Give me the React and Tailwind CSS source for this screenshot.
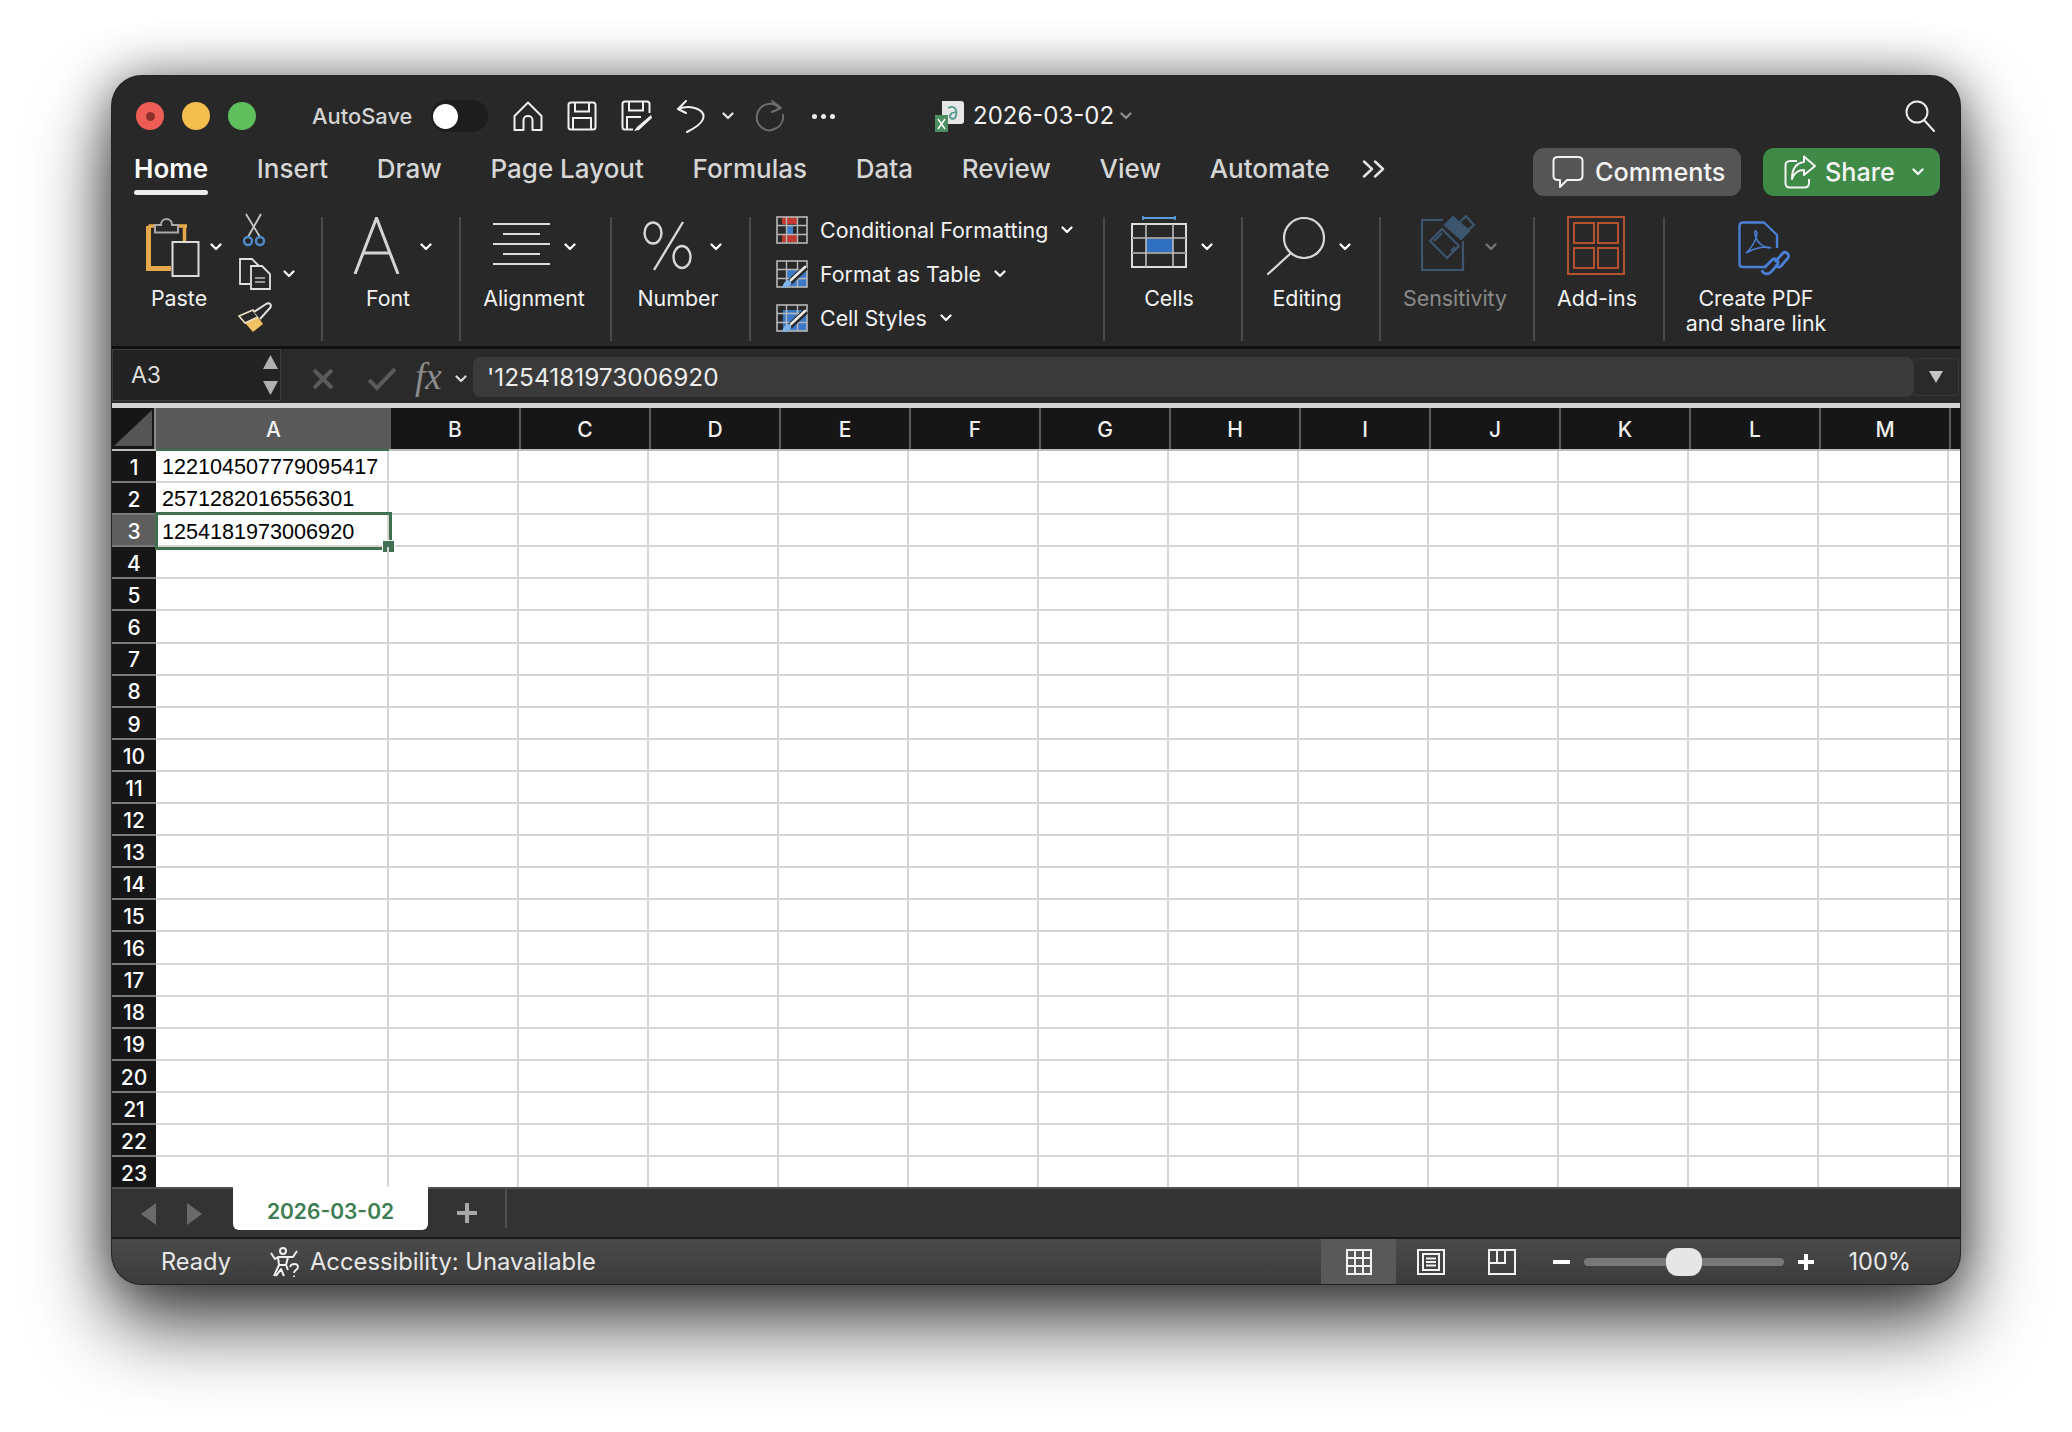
import React from "react";

const cols = ["B","C","D","E","F","G","H","I","J","K","L","M"];
const rows = Array.from({ length: 23 }, (_, i) => i + 1);
const data = { 1: "122104507779095417", 2: "2571282016556301", 3: "1254181973006920" };

function Chev({ c = "#ffffff", className = "" }) {
  return (
    <svg width="12" height="8" viewBox="0 0 12 8" className={"shrink-0 " + className}>
      <path d="M1.5 1.5 L6 6 L10.5 1.5" fill="none" stroke={c} strokeWidth="2.2" strokeLinecap="round" strokeLinejoin="round" />
    </svg>
  );
}

function Label({ children, dim }) {
  return (
    <div className={"flex justify-center text-[21.4px] leading-[24.5px] whitespace-nowrap " + (dim ? "text-[#8a8a8a]" : "text-[#f2f2f2]")}>
      <span className="text-center">{children}</span>
    </div>
  );
}

function Sep() {
  return <div className="w-[2px] h-[124px] mt-[20px] bg-[#4a4a4a] shrink-0" />;
}

function CellStyleIcon({ variant }) {
  const g = "#b8b8b8";
  return (
    <svg width="32" height="28" viewBox="0 0 32 28" className="shrink-0">
      {variant === "cond" && (
        <>
          <rect x="6" y="1" width="15" height="7" fill="#c0392f" />
          <rect x="6" y="19" width="15" height="7" fill="#c0392f" />
          <rect x="11" y="9" width="6" height="9" fill="#3f7fc8" />
        </>
      )}
      {variant === "table" && <rect x="11" y="9" width="20" height="18" fill="#3b79c9" />}
      {variant === "style" && <rect x="7" y="6" width="24" height="21" fill="#3b79c9" />}
      <rect x="1" y="1" width="30" height="26" fill="none" stroke={g} strokeWidth="1.6" />
      <path d="M1 9.5H31M1 18.5H31M10.5 1V27M21.5 1V27" stroke={g} strokeWidth="1.4" fill="none" />
      {variant !== "cond" && (
        <>
          <path d="M30 7 L14 22" stroke="#282828" strokeWidth="6" />
          <path d="M29 7 L15 20" stroke="#e8e8e8" strokeWidth="2.6" strokeLinecap="round" />
          <path d="M6 28 C8 21 11 19 15 21 C16 25 12 28 6 28Z" fill="#7fb3ea" />
        </>
      )}
    </svg>
  );
}

function StyleRow({ v, text }) {
  return (
    <div className="flex items-center h-[28px]">
      <CellStyleIcon variant={v} />
      <span className="ml-[12px] text-[21.4px] text-[#f2f2f2] whitespace-nowrap">{text}</span>
      <Chev className="ml-[13px]" />
    </div>
  );
}

export default function App() {
  return (
    <div className="w-[2072px] h-[1432px] bg-[#ffffff] pt-[76px] pl-[112px] overflow-hidden [font-family:Inter,'Noto_Sans',sans-serif]">
      <div className="w-[1848px] h-[1208px] rounded-[30px] overflow-hidden flex flex-col bg-[#282828] shadow-[0_0_0_1px_#222222,0_40px_80px_rgba(0,0,0,0.72),0_0_50px_rgba(0,0,0,0.45)]">
        {/* Title row */}
        <div className="h-[68px] pt-[12px] flex items-center shrink-0">
          <div className="ml-[24px] w-[28px] h-[28px] rounded-full bg-[#ee5d55] flex items-center justify-center">
            <div className="w-[9px] h-[9px] rounded-full bg-[#8f2f2a]" />
          </div>
          <div className="ml-[18px] w-[28px] h-[28px] rounded-full bg-[#f5bf4f]" />
          <div className="ml-[18px] w-[28px] h-[28px] rounded-full bg-[#5fbf5d]" />
          <span className="ml-[56px] text-[21.9px] font-medium text-[#d4d4d4] w-[100px] whitespace-nowrap">AutoSave</span>
          <div className="ml-[19px] w-[57px] h-[32px] rounded-full bg-[#1d1d1d] pl-[2px] flex items-center">
            <div className="w-[25px] h-[25px] rounded-full bg-white" />
          </div>
          <svg width="30" height="30" viewBox="0 0 30 30" className="ml-[25px]" fill="none" stroke="#f0f0f0" strokeWidth="2">
            <path d="M15 1.5 L28.5 15 V29 H19.5 V19 C19.5 13.5 10.5 13.5 10.5 19 V29 H1.5 V15 Z" strokeLinejoin="round" />
          </svg>
          <svg width="30" height="30" viewBox="0 0 30 30" className="ml-[24px]" fill="none" stroke="#f0f0f0" strokeWidth="2">
            <path d="M4 1.5 H26 C27.5 1.5 28.5 2.5 28.5 4 V26 C28.5 27.5 27.5 28.5 26 28.5 H4 C2.5 28.5 1.5 27.5 1.5 26 V4 C1.5 2.5 2.5 1.5 4 1.5Z" />
            <path d="M8 1.5 V10.5 H22 V1.5 M6 28.5 V17 H24 V28.5" />
          </svg>
          <svg width="32" height="32" viewBox="0 0 32 32" className="ml-[24px]" fill="none" stroke="#f0f0f0" strokeWidth="2">
            <path d="M12 29.5 H4 C2.5 29.5 1.5 28.5 1.5 27 V4 C1.5 2.5 2.5 1.5 4 1.5 H26 C27.5 1.5 28.5 2.5 28.5 4 V13" />
            <path d="M8 1.5 V10.5 H22 V1.5 M6 29 V17 H20" />
            <path d="M30 15 L16 27 L13 31 L18 30 L31 18Z" fill="#f0f0f0" stroke="none" />
          </svg>
          <svg width="30" height="33" viewBox="0 0 30 33" className="ml-[23px]" fill="none" stroke="#f0f0f0" strokeWidth="2">
            <path d="M10 1 L2 9 L10 13 M2 9 C16 4 30 10 27 19 C25 25 17 29 11 32" strokeLinecap="round" strokeLinejoin="round" />
          </svg>
          <Chev className="ml-[16px]" c="#e8e8e8" />
          <svg width="30" height="32" viewBox="0 0 30 32" className="ml-[21px]" fill="none" stroke="#6e6e6e" strokeWidth="2">
            <path d="M24 8 C18 0 4 4 2 15 C0 25 10 32 17 30 C24 28 29 23 28 15" strokeLinecap="round" />
            <path d="M17 1 L26 8 L17 12" strokeLinejoin="round" strokeLinecap="round" />
          </svg>
          <div className="ml-[27px] flex gap-[4px]">
            <div className="w-[5px] h-[5px] rounded-full bg-[#eeeeee]" />
            <div className="w-[5px] h-[5px] rounded-full bg-[#eeeeee]" />
            <div className="w-[5px] h-[5px] rounded-full bg-[#eeeeee]" />
          </div>
          <svg width="32" height="34" viewBox="0 0 32 34" className="ml-[99px]">
            <path d="M8 2 H27 C29 2 30 3 30 5 V22 C30 24 29 25 27 25 H8Z" fill="#e6e6e6" />
            <path d="M14 9 C22 5 24 13 21 19 C18 21 13 18 18 14 L22 13" fill="none" stroke="#4f9a8c" strokeWidth="1.8" />
            <rect x="1" y="16" width="13" height="17" fill="#4e8f61" />
            <path d="M4 20 L11 30 M11 20 L4 30" stroke="#ffffff" strokeWidth="1.5" />
          </svg>
          <span className="ml-[7px] text-[24px] text-[#f2f2f2] whitespace-nowrap">2026-03-02</span>
          <Chev className="ml-[6px]" c="#8f8f8f" />
          <svg width="32" height="32" viewBox="0 0 32 32" className="ml-auto mr-[24px]" fill="none" stroke="#ececec" strokeWidth="2">
            <circle cx="13" cy="12" r="10.5" />
            <path d="M20 20 L30 31" strokeLinecap="round" />
          </svg>
        </div>

        {/* Tabs row */}
        <div className="h-[53px] flex items-start shrink-0">
          <div className="ml-[22px] pt-[10px] flex gap-[48.7px] text-[26px] leading-[30px] font-medium text-[#d6d6d6]">
            <div className="flex flex-col text-white font-semibold">
              <span>Home</span>
              <div className="mt-[6px] h-[5px] rounded-full bg-[#ececec]" />
            </div>
            <span>Insert</span>
            <span>Draw</span>
            <span>Page Layout</span>
            <span>Formulas</span>
            <span>Data</span>
            <span>Review</span>
            <span>View</span>
            <span>Automate</span>
          </div>
          <svg width="24" height="18" viewBox="0 0 24 18" className="ml-[32px] mt-[16px]" fill="none" stroke="#e4e4e4" strokeWidth="2.4">
            <path d="M2 1.5 L10 9 L2 16.5 M13 1.5 L21 9 L13 16.5" strokeLinecap="round" strokeLinejoin="round" />
          </svg>
          <div className="ml-auto mt-[4px] flex gap-[22px] mr-[20px]">
            <div className="w-[208px] h-[48px] rounded-[11px] bg-[#555555] flex items-center pl-[19px]">
              <svg width="32" height="34" viewBox="0 0 32 34" fill="none" stroke="#f2f2f2" strokeWidth="2">
                <path d="M6 2 H26 C29 2 30.5 3.5 30.5 6 V21 C30.5 24 29 25 26 25 H15 L8 32 V25 H6 C3 25 1.5 24 1.5 21 V6 C1.5 3.5 3 2 6 2Z" strokeLinejoin="round" />
              </svg>
              <span className="ml-[11px] pt-[2px] text-[25.2px] font-medium text-[#f5f5f5]">Comments</span>
            </div>
            <div className="w-[177px] h-[48px] rounded-[11px] bg-[#3f8a46] flex items-center pl-[21px]">
              <svg width="32" height="34" viewBox="0 0 32 34" fill="none" stroke="#f4f4f4" strokeWidth="2">
                <path d="M13 6 H6 C3 6 1.5 8 1.5 10 V28 C1.5 31 3 32.5 6 32.5 H20 C23 32.5 25 31 25 28 V24" />
                <path d="M20 1.5 L31 11 L20 20 V15 C14 15 10 18 8 24 C8 14 12 8 20 7Z" strokeLinejoin="round" />
              </svg>
              <span className="ml-[9px] pt-[2px] text-[25.2px] font-medium text-[#f5f5f5]">Share</span>
              <Chev className="ml-[17px]" />
            </div>
          </div>
        </div>

        {/* Ribbon */}
        <div className="h-[152px] border-b-[3px] border-[#101010] flex shrink-0 text-white">
          {/* Clipboard */}
          <div className="w-[209px] pt-[21px] shrink-0 flex">
            <div className="ml-[34px] w-[76px]">
              <div className="h-[68px] flex items-start">
                <svg width="54" height="60" viewBox="0 0 54 60" className="shrink-0 -mt-[1px]">
                  <path d="M2.5 9 V51.5 H25" fill="none" stroke="#e6a84a" strokeWidth="5" />
                  <path d="M2.5 9 H41 M38.5 9 V24" fill="none" stroke="#e6a84a" strokeWidth="3.5" />
                  <path d="M9 15.5 V8 H15 C15 0 26 0 26 8 H32 V15.5Z" fill="#282828" stroke="#a8a8a8" strokeWidth="2" />
                  <rect x="26.5" y="25" width="26" height="34" fill="#282828" stroke="#dcdcdc" strokeWidth="2" />
                </svg>
                <Chev className="ml-[10px] mt-[25px]" />
              </div>
              <div className="w-[66px]"><Label>Paste</Label></div>
            </div>
            <div className="ml-[16px] w-[40px] -mt-[5px] flex flex-col">
              <svg width="24" height="34" viewBox="0 0 24 34" className="ml-[4px]" fill="none">
                <path d="M4 1 L18 24 M19 1 L6 24" stroke="#c8c8c8" strokeWidth="1.8" />
                <circle cx="6" cy="28" r="4" stroke="#4f8bcb" strokeWidth="2.4" />
                <circle cx="18" cy="28" r="4" stroke="#4f8bcb" strokeWidth="2.4" />
              </svg>
              <div className="flex items-center mt-[10px] h-[33px]">
                <svg width="33" height="33" viewBox="0 0 33 33" className="shrink-0" fill="none" stroke="#e2e2e2" strokeWidth="1.8">
                  <path d="M12 27 H2 V2 H14 L21 9" />
                  <path d="M13 9 H24 L32 17 V32 H13Z" fill="#282828" />
                  <path d="M17 21 H27 M17 25 H27" strokeWidth="1.4" stroke="#bdbdbd" />
                </svg>
                <Chev className="ml-[12px]" />
              </div>
              <svg width="34" height="32" viewBox="0 0 34 32" className="mt-[11px] shrink-0">
                <path d="M1 15 L15 9 L25 23 L15 31Z" fill="#f0c262" />
                <path d="M1 15 L15 9 L20 16 L7 22Z" fill="#282828" stroke="#f0e3c4" strokeWidth="1.6" />
                <path d="M16 11 L28 3 C32 1 34 4 32 7 L22 18" fill="#282828" stroke="#e4e4e4" strokeWidth="2" />
              </svg>
            </div>
          </div>
          <Sep />
          {/* Font */}
          <div className="w-[136px] pt-[21px] shrink-0">
            <div className="ml-[30px] w-[70px]">
              <div className="h-[68px] flex items-start">
                <svg width="47" height="57" viewBox="0 0 47 57" className="shrink-0 -mt-[1px]" fill="none" stroke="#d4d4d4" strokeWidth="3">
                  <path d="M2 57 L23.5 1 L45 57 M9 36 H38" />
                </svg>
                <Chev className="ml-[20px] mt-[25px]" />
              </div>
              <Label>Font</Label>
            </div>
          </div>
          <Sep />
          {/* Alignment */}
          <div className="w-[149px] pt-[21px] shrink-0">
            <div className="ml-[32px] w-[82px]">
              <div className="h-[68px] flex items-start">
                <svg width="57" height="42" viewBox="0 0 57 42" className="shrink-0 mt-[5px]" fill="none" stroke="#dddddd" strokeWidth="2">
                  <path d="M0 1 H57 M10 11 H47 M0 21 H57 M10 31 H47 M0 41 H57" />
                </svg>
                <Chev className="ml-[14px] mt-[25px]" />
              </div>
              <Label>Alignment</Label>
            </div>
          </div>
          <Sep />
          {/* Number */}
          <div className="w-[137px] pt-[21px] shrink-0">
            <div className="ml-[31px] w-[70px]">
              <div className="h-[68px] flex items-start">
                <svg width="49" height="50" viewBox="0 0 49 50" className="shrink-0 mt-[3px]" fill="none" stroke="#d8d8d8" strokeWidth="2.4">
                  <ellipse cx="10" cy="12" rx="8.5" ry="10.5" />
                  <ellipse cx="39" cy="36" rx="8.5" ry="11" />
                  <path d="M40 1 L11 49" />
                </svg>
                <Chev className="ml-[18px] mt-[25px]" />
              </div>
              <Label>Number</Label>
            </div>
          </div>
          <Sep />
          {/* Styles */}
          <div className="w-[352px] pt-[19px] shrink-0 pl-[25px] flex flex-col gap-[16px]">
            <StyleRow v="cond" text="Conditional Formatting" />
            <StyleRow v="table" text="Format as Table" />
            <StyleRow v="style" text="Cell Styles" />
          </div>
          <Sep />
          {/* Cells */}
          <div className="w-[136px] pt-[21px] shrink-0">
            <div className="ml-[26px] w-[76px]">
              <div className="h-[68px] flex items-start">
                <svg width="56" height="52" viewBox="0 0 56 52" className="shrink-0 -mt-[2px]" fill="none">
                  <path d="M12 2 H44 M12 0 V4 M44 0 V4" stroke="#5a9bd8" strokeWidth="1.8" />
                  <rect x="15" y="21" width="27" height="15" fill="#2f6fc0" />
                  <rect x="1" y="8" width="54" height="43" stroke="#dcdcdc" strokeWidth="2" />
                  <path d="M1 22 H55 M1 37 H55" stroke="#9a9a9a" strokeWidth="2" />
                  <path d="M15 8 V51 M42 8 V51" stroke="#bdbdbd" strokeWidth="1.6" />
                </svg>
                <Chev className="ml-[14px] mt-[25px]" />
              </div>
              <Label>Cells</Label>
            </div>
          </div>
          <Sep />
          {/* Editing */}
          <div className="w-[136px] pt-[21px] shrink-0">
            <div className="ml-[24px] w-[80px]">
              <div className="h-[68px] flex items-start">
                <svg width="58" height="58" viewBox="0 0 58 58" className="shrink-0 -mt-[1px]" fill="none" stroke="#d8d8d8" strokeWidth="2.2">
                  <circle cx="37" cy="21" r="20" />
                  <path d="M24 36 L1 57" strokeLinecap="round" />
                </svg>
                <Chev className="ml-[14px] mt-[25px]" />
              </div>
              <Label>Editing</Label>
            </div>
          </div>
          <Sep />
          {/* Sensitivity */}
          <div className="w-[152px] pt-[21px] shrink-0">
            <div className="ml-[40px] w-[68px]">
              <div className="h-[68px] flex items-start">
                <svg width="54" height="56" viewBox="0 0 54 56" className="shrink-0 -mt-[3px]" fill="none" stroke="#3d566f" strokeWidth="2.2">
                  <path d="M22 5 H1 V55 H42 V26" />
                  <path d="M9 26 L21 14 L38 31 L26 43 Z M13 26 L21 18 M30 36 L34 32" fill="#282828" />
                  <path d="M24 10 L32 2 L48 16 L40 24Z" fill="#3d566f" />
                  <path d="M38 8 L45 1 L53 10 L46 16" />
                </svg>
                <Chev className="ml-[10px] mt-[25px]" c="#767676" />
              </div>
              <Label dim>Sensitivity</Label>
            </div>
          </div>
          <Sep />
          {/* Add-ins */}
          <div className="w-[128px] pt-[21px] shrink-0">
            <div className="ml-[32px] w-[60px]">
              <div className="h-[68px] flex items-start">
                <svg width="58" height="59" viewBox="0 0 58 59" className="shrink-0 -mt-[2px]" fill="none" stroke="#b4512f" strokeWidth="2">
                  <rect x="1" y="1" width="56" height="57" />
                  <rect x="7" y="7" width="20" height="20" />
                  <rect x="31" y="7" width="20" height="20" />
                  <rect x="7" y="32" width="20" height="20" />
                  <rect x="31" y="32" width="20" height="20" />
                </svg>
              </div>
              <Label>Add-ins</Label>
            </div>
          </div>
          <Sep />
          {/* PDF */}
          <div className="flex-1 pt-[21px]">
            <div className="ml-[73px] w-[36px]">
              <div className="h-[68px] flex items-start">
                <svg width="52" height="57" viewBox="0 0 52 57" className="shrink-0 mt-[3px]" fill="none" stroke="#4a7fd6" strokeWidth="2.4">
                  <path d="M27 46 H5 C3 46 1.5 45 1.5 43 V5 C1.5 3 3 1.5 5 1.5 H26 L39 14 V27" strokeLinejoin="round" />
                  <path d="M8 32 C13 28 19 18 19 12 C18 8 16 10 17 14 C19 22 26 27 33 27 C29 25 18 26 8 32Z" strokeWidth="1.5" />
                  <path d="M26 47 L34 39 C37 36 42 40 39 44 L34 50 C31 54 25 54 24 49 M37 41 L44 33 C47 29 52 33 50 37 L43 45 C41 47 38 46 37 44" strokeWidth="2.8" />
                </svg>
              </div>
              <Label>Create PDF<br />and share link</Label>
            </div>
          </div>
        </div>

        {/* Formula bar */}
        <div className="h-[59px] flex shrink-0 bg-[#2a2a2a] border-b-[5px] border-[#d4d4d4]">
          <div className="w-[169px] h-[52px] bg-[#232323] border border-[#3c3c3c] flex items-center justify-between pl-[18px] pr-[1px]">
            <span className="text-[23px] text-[#dedede]">A3</span>
            <svg width="17" height="40" viewBox="0 0 17 40">
              <path d="M8.5 0 L16 14 H1Z M1 26 H16 L8.5 40Z" fill="#b0b0b0" />
            </svg>
          </div>
          <svg width="22" height="22" viewBox="0 0 22 22" className="ml-[31px] mt-[19px]" fill="none" stroke="#5a5a5a" strokeWidth="4">
            <path d="M2 2 L20 20 M20 2 L2 20" />
          </svg>
          <svg width="30" height="24" viewBox="0 0 30 24" className="ml-[33px] mt-[18px]" fill="none" stroke="#5a5a5a" strokeWidth="4">
            <path d="M2 13 L10 21 L28 2" />
          </svg>
          <span className="ml-[18px] mt-[8px] w-[34px] text-[37px] leading-[40px] italic text-[#8c8c8c] [font-family:'Liberation_Serif',serif]">fx</span>
          <Chev className="ml-[6px] mt-[26px]" c="#d8d8d8" />
          <div className="ml-[6px] mt-[8px] w-[1440px] h-[40px] rounded-[7px] bg-[#3a3a3a] pl-[14px] flex items-center text-[24.4px] text-[#ececec]">'1254181973006920</div>
          <div className="mt-[9px] ml-0 w-[46px] h-[38px] rounded-[4px] bg-[#2a2a2a] border border-[#383838] flex items-center justify-center">
            <svg width="14" height="12" viewBox="0 0 14 12"><path d="M0 0 H14 L7 12Z" fill="#c4c4c4" /></svg>
          </div>
        </div>

        {/* Column headers */}
        <div className="h-[43px] flex shrink-0 bg-[#161616] border-b-[2px] border-[#bdbdbd] text-[21px] font-medium text-[#f0f0f0]">
          <div className="w-[44px] shrink-0 border-r-[2px] border-[#8c8c8c] flex items-end justify-end pr-[2px] pb-[3px]">
            <svg width="38" height="36" viewBox="0 0 38 36"><path d="M38 0 V36 H0Z" fill="#555555" /></svg>
          </div>
          <div className="w-[233px] shrink-0 bg-[#595959] border-b-[2px] -mb-[2px] border-[#3f7050] flex items-center justify-center pl-[2px] pt-[2px]">A</div>
          {cols.map((c) => (
            <div key={c} className="w-[130px] shrink-0 border-l-[2px] border-[#5c5c5c] flex items-center justify-center pt-[2px]">{c}</div>
          ))}
          <div className="flex-1 border-l-[2px] border-[#5c5c5c]" />
        </div>

        {/* Sheet */}
        <div className="h-[736px] shrink-0 overflow-hidden bg-white flex flex-col">
          {rows.map((r) => (
            <div key={r} className="h-[32.1px] shrink-0 flex">
              <div className={"w-[44px] shrink-0 flex items-center justify-center pt-[3px] text-[21px] font-medium text-white border-b-[2px] border-[#7a7a7a] " + (r === 3 ? "bg-[#5e5e5e]" : "bg-[#161616]")}>{r}</div>
              <div className="relative w-[233px] shrink-0 border-r-[2px] border-b-[2px] border-[#d6d6d6] flex items-center pl-[6px] pt-[3px] text-[21.6px] text-black [font-family:'Liberation_Sans',sans-serif] whitespace-nowrap">
                {data[r] || ""}
                {r === 3 && (
                  <>
                    <div className="absolute -left-[1px] -top-[3px] -right-[5px] -bottom-[5px] border-[3px] border-[#3f7050]" />
                    <div className="absolute -right-[7px] -bottom-[7px] w-[11px] h-[11px] bg-[#3f7050] outline outline-white" />
                  </>
                )}
              </div>
              {cols.map((c) => (
                <div key={c} className="w-[130px] shrink-0 border-r-[2px] border-b-[2px] border-[#d6d6d6]" />
              ))}
              <div className="flex-1 border-b-[2px] border-[#d6d6d6]" />
            </div>
          ))}
        </div>

        {/* Sheet tabs */}
        <div className="h-[52px] shrink-0 flex bg-[#333333] border-t-[2px] border-[#505050] border-b-[2px] border-b-[#1a1a1a]">
          <svg width="62" height="22" viewBox="0 0 62 22" className="ml-[29px] mt-[14px]">
            <path d="M15 0 V22 L0 11Z M46 0 V22 L61 11Z" fill="#6a6a6a" />
          </svg>
          <div className="ml-[30px] -mt-[2px] pt-[7px] w-[195px] h-[43px] bg-white rounded-b-[6px] flex items-center justify-center text-[21px] font-semibold text-[#3d7d52]">2026-03-02</div>
          <svg width="20" height="20" viewBox="0 0 20 20" className="ml-[29px] mt-[14px]">
            <path d="M10 0 V20 M0 10 H20" stroke="#a8a8a8" strokeWidth="4" />
          </svg>
          <div className="ml-[28px] w-[2px] h-[41px] bg-[#505050] -mt-[2px]" />
        </div>

        {/* Status bar */}
        <div className="h-[45px] shrink-0 flex items-center bg-gradient-to-b from-[#4a4a4a] to-[#3c3c3c] text-[23.6px] text-[#e8e8e8]">
          <span className="ml-[49px]">Ready</span>
          <svg width="32" height="32" viewBox="0 0 32 32" className="ml-[38px]" fill="none" stroke="#f0f0f0" strokeWidth="2">
            <circle cx="14" cy="5" r="3" />
            <path d="M2 7 L6 13 L9 11 H19 L24 11 L28 5 M9 11 L10 19 L5 30 M19 11 L17 19 L19 24 M10 19 H17 M7 30 L12 23 L15 30" strokeLinejoin="round" />
            <path d="M21 21 C22 17 29 17 29 21 C29 24 25 24 25 27 M25 29.5 V31" strokeWidth="1.8" />
          </svg>
          <span className="ml-[9px] text-[23.8px]">Accessibility: Unavailable</span>
          <div className="ml-auto self-stretch w-[75px] bg-[#595959] flex items-center justify-center">
            <svg width="26" height="26" viewBox="0 0 26 26" fill="none" stroke="#f2f2f2" strokeWidth="2">
              <rect x="1" y="1" width="24" height="24" />
              <path d="M1 9 H25 M1 17 H25 M9 1 V25 M17 1 V25" />
            </svg>
          </div>
          <svg width="28" height="26" viewBox="0 0 28 26" className="ml-[21px]" fill="none" stroke="#f2f2f2" strokeWidth="2">
            <rect x="1" y="1" width="26" height="24" />
            <rect x="6" y="5" width="16" height="16" />
            <path d="M9 9.5 H19 M9 13 H19 M9 16.5 H19" />
          </svg>
          <svg width="28" height="26" viewBox="0 0 28 26" className="ml-[43px]" fill="none" stroke="#f2f2f2" strokeWidth="2">
            <rect x="1" y="1" width="26" height="24" />
            <path d="M1 14 H17 V1 M9 1 V14" />
          </svg>
          <div className="ml-[37px] w-[17px] h-[4px] bg-white" />
          <div className="ml-[14px] relative w-[200px] h-[8px] rounded-full bg-[#787878]">
            <div className="absolute left-[82px] -top-[10px] w-[36px] h-[28px] rounded-[12px] bg-[#e6e6e6]" />
          </div>
          <div className="ml-[14px] w-[16px] h-[16px] relative">
            <div className="absolute left-[6px] top-0 w-[4px] h-[16px] bg-white" />
            <div className="absolute left-0 top-[6px] w-[16px] h-[4px] bg-white" />
          </div>
          <span className="ml-[34px] mr-[49px] whitespace-nowrap">100%</span>
        </div>
      </div>
    </div>
  );
}
